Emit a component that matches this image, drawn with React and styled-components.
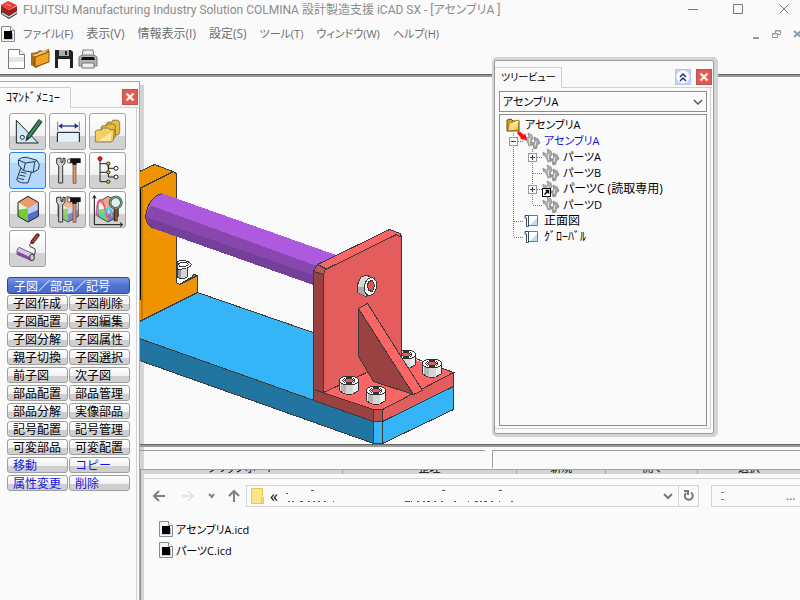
import React from "react";
import styled, { createGlobalStyle, css } from "styled-components";

const GlobalStyle = createGlobalStyle`
  * {
    box-sizing: border-box;
  }
  body {
    margin: 0;
    background: #fafafa;
    font-family: "Open Sans", "Noto Sans CJK JP", sans-serif;
    font-size: 12px;
    font-feature-settings: "palt";
    color: #000;
  }
  button, input, select {
    font: inherit;
    font-feature-settings: inherit;
    color: inherit;
    margin: 0;
    padding: 0;
    border: 0;
    background: none;
  }
  svg {
    display: block;
    flex: none;
  }
`;

const Page = styled.div`
  display: flex;
  flex-direction: column;
  min-height: 100vh;
  position: relative;
  overflow: hidden;
`;

const Header = styled.header`
  border-bottom: 2px solid #999;
  box-shadow: inset 0 -1px 0 #666;
`;

const TitleBar = styled.div`
  display: flex;
  align-items: center;
  height: 20px;
  padding-left: 1px;
  gap: 5px;
  color: #8c8c8c;
`;

const Title = styled.h1`
  flex: 1;
  margin: 0;
  font-family: Roboto, "Noto Sans CJK JP", sans-serif;
  font-size: 12px;
  font-weight: 400;
  line-height: 20px;
  white-space: nowrap;
`;

const WindowButtons = styled.div`
  display: flex;
  gap: 29px;
  padding-right: 8px;
`;

const PlainButton = styled.button`
  display: flex;
  align-items: center;
  justify-content: center;
`;

const MenuBar = styled.nav`
  display: flex;
  align-items: center;
  height: 28px;
  padding-left: 1px;
`;

const MenuList = styled.div`
  display: flex;
  flex: 1;
  align-items: center;
  gap: 13px;
  padding-left: 8px;
  color: #6e6e6e;
`;

const MenuItem = styled(PlainButton)`
  font-size: ${({ $kana }) => ($kana ? 11 : 12)}px;
  line-height: 16px;
`;

const MdiButtons = styled.div`
  display: flex;
  gap: 12px;
  margin-right: -3px;
`;

const ToolBar = styled.div`
  display: flex;
  align-items: center;
  height: 27px;
  padding: 0 0 5px 6px;
  gap: 4px;
`;

const Body = styled.div`
  display: flex;
  flex: 1;
`;

const Sidebar = styled.aside`
  flex: none;
  width: 140px;
  margin-top: 4px;
  padding: 5px 2px 0 0;
  border: 1px solid #a8a8a8;
  border-width: 1px 1px 0 0;
  box-shadow: 4px 4px 0 #d4d4d4;
`;

const PanelHead = styled.div`
  display: flex;
  height: 21px;
`;

const Tab = styled.h2`
  flex: none;
  width: ${({ $width }) => $width}px;
  margin: 0;
  padding-left: 6px;
  border: 1px solid #d0d0d0;
  border-width: 1px 1px 0 0;
  font-size: ${({ $size }) => $size}px;
  font-weight: 400;
  line-height: 19px;
  white-space: nowrap;
`;

const TabRest = styled.div`
  display: flex;
  flex: 1;
  justify-content: flex-end;
  gap: 5px;
  margin-right: -1px;
  padding-top: 2px;
  border-bottom: 1px solid #d0d0d0;
`;

const CloseButton = styled.button`
  display: flex;
  align-items: center;
  justify-content: center;
  width: 16px;
  height: 16px;
  border: 1px solid #c94f4f;
  background: #e05a5a;
`;

const CollapseButton = styled(CloseButton)`
  border-color: #b8c8ec;
  background: #c3d2f2;
`;

const SidebarBody = styled.div`
  height: calc(100% - 21px);
  padding: 5px 6px 0 7px;
  border-right: 1px solid #d0d0d0;
`;

const IconGrid = styled.div`
  display: grid;
  grid-template-columns: repeat(3, 37px);
  gap: 2px 3px;
  padding-left: 2px;
`;

const IconButton = styled.button`
  width: 37px;
  height: 37px;
  border: 1px solid #a3a3a3;
  border-radius: 3px;
  background: linear-gradient(#fff, #f0f0f0 64%, #d2d2d2 64%);
  ${({ $active }) =>
    $active &&
    css`
      border-color: #2f7fe0;
      background: linear-gradient(#d6f0fb, #cbe8fa 28%, #b4d6fa 28%);
    `}
`;

const GroupTitle = styled.button`
  display: block;
  width: 100%;
  height: 17px;
  margin-top: 10px;
  padding-left: 6px;
  border: 1px solid #2f4a80;
  border-radius: 3px;
  background: linear-gradient(#7a97e4, #5272d2 50%, #4a69c8);
  color: #fff;
  font-family: "Noto Sans CJK JP", sans-serif;
  font-feature-settings: normal;
  line-height: 14px;
  text-align: left;
`;

const CommandGrid = styled.div`
  display: grid;
  grid-template-columns: 1fr 1fr;
  gap: 2px 1px;
  margin-top: 1px;
`;

const CommandButton = styled.button`
  height: 16px;
  padding: 0 0 1px 5px;
  border: 1px solid #9f9f9f;
  border-radius: 3px;
  background: linear-gradient(#fff, #f0f0f0 60%, #cfcfcf 60%);
  font-family: "Noto Sans CJK JP", sans-serif;
  font-feature-settings: normal;
  line-height: 13px;
  text-align: left;
  white-space: nowrap;
  color: ${({ $blue }) => ($blue ? "#1414e0" : "#000")};
`;

const Main = styled.main`
  display: flex;
  flex: 1;
  flex-direction: column;
  min-width: 0;
`;

const Canvas = styled.svg`
  flex: 1;
  width: 100%;
  height: 367px;
  min-height: 367px;
`;

const StatusStrip = styled.div`
  display: flex;
  gap: 7px;
  height: 25px;
  padding: 5px 0 1px;
  border-top: 1px solid #666;
  box-shadow: inset 0 2px 0 #999;
`;

const StatusCell = styled.div`
  flex: ${({ $grow }) => $grow};
  border-top: 1px solid #a0a0a0;
  border-left: ${({ $edge }) => ($edge ? "1px solid #a0a0a0" : "0")};
`;

const Explorer = styled.section`
  height: 131px;
  border-left: 1px solid #8e8e8e;
`;

const Ribbon = styled.div`
  display: grid;
  grid-template-columns: 202fr 175fr 89fr 92fr 102fr;
  height: 5px;
  overflow: hidden;
  border-top: 1px solid #a0a4a0;
  background: #d4d4d4;
`;

const RibbonGroup = styled.div`
  display: flex;
  align-items: flex-end;
  justify-content: center;
  height: 4px;
  border-right: 1px solid #a8a8a8;
  font-size: 11px;
  line-height: 12px;

  &:last-child {
    border-right: 0;
  }
`;

const NavBar = styled.div`
  display: flex;
  align-items: center;
  height: 33px;
  margin-top: 4px;
  padding: 4px 0 3px 12px;
  border-top: 1px solid #d4d4d4;
`;

const NavButtons = styled.div`
  display: flex;
  gap: 13px;
  width: 93px;
`;

const AddressBar = styled.div`
  display: flex;
  flex: 1;
  align-items: center;
  height: 22px;
  padding-left: 4px;
  border: 1px solid #d4d4d4;
`;

const AddressText = styled.div`
  display: flex;
  flex: 1;
  align-items: center;
  gap: 8px;
  padding-left: 6px;
  font-size: 16px;
  line-height: 18px;
`;

const RefreshButton = styled(PlainButton)`
  width: 20px;
  height: 20px;
  border-left: 1px solid #d4d4d4;
`;

const SearchBox = styled.label`
  display: flex;
  align-items: center;
  width: 89px;
  height: 22px;
  margin-left: 12px;
  padding-left: 9px;
  border: 1px solid #d4d4d4;
  border-right: 0;
  color: #666;
`;

const SearchInput = styled.input`
  width: 14px;
  margin-left: auto;
  outline: none;
`;

const FileList = styled.ul`
  margin: 0;
  padding: 7px 0 0 18px;
  list-style: none;
`;

const FileItem = styled.li`
  display: flex;
  align-items: center;
  gap: 3px;
  height: 21px;
  font-size: 11px;
`;

/* The tree window floats over the drawing area */
const TreeWindow = styled.section`
  position: absolute;
  top: 60px;
  right: 86px;
  display: flex;
  flex-direction: column;
  width: 220px;
  height: 374px;
  padding: 6px 2px 4px 0;
  border: 1px solid #9a9a9a;
  border-radius: 2px;
  background: #fafafa;
  box-shadow: 1px 0 0 3px #d4d4d4;
`;

const TreeBody = styled.div`
  display: flex;
  flex: 1;
  flex-direction: column;
  gap: 2px;
  padding: 3px 3px 2px 4px;
  border: 1px solid #d0d0d0;
  border-width: 0 1px 1px 0;
`;

const SelectWrap = styled.div`
  display: grid;
  align-items: center;
  height: 21px;
  border: 1px solid #8c8c8c;

  > * {
    grid-area: 1 / 1;
  }
  > svg {
    justify-self: end;
    margin-right: 3px;
    pointer-events: none;
  }
`;

const Select = styled.select`
  appearance: none;
  width: 100%;
  height: 19px;
  padding-left: 3px;
  font-size: 11px;
  outline: none;
`;

const Tree = styled.ul`
  flex: 1;
  margin: 0;
  padding: 2px 0 0 4px;
  border: 1px solid #8c8c8c;
  list-style: none;
`;

const TreeRow = styled.li`
  display: flex;
  align-items: center;
  height: 16px;
  font-size: ${({ $size }) => $size}px;
  line-height: 16px;
  white-space: nowrap;
  color: ${({ $blue }) => ($blue ? "#1414e0" : "#000")};
`;

const TreeLabel = styled.span`
  padding-left: 3px;
`;

const menuItems = [
  { label: "ファイル(F)", kana: true },
  { label: "表示(V)" },
  { label: "情報表示(I)" },
  { label: "設定(S)" },
  { label: "ツール(T)", kana: true },
  { label: "ウィンドウ(W)", kana: true },
  { label: "ヘルプ(H)", kana: true },
];

const commands = [
  "子図作成", "子図削除",
  "子図配置", "子図編集",
  "子図分解", "子図属性",
  "親子切換", "子図選択",
  "前子図", "次子図",
  "部品配置", "部品管理",
  "部品分解", "実像部品",
  "記号配置", "記号管理",
  "可変部品", "可変配置",
  "移動", "コピー",
  "属性変更", "削除",
];

const blueCommands = ["移動", "コピー", "属性変更", "削除"];

const treeRows = [
  { label: "アセンブリA", icon: "folder", cells: [] },
  { label: "アセンブリA", icon: "active", cells: ["minus"], blue: true },
  { label: "パーツA", icon: "part", cells: ["line", "plus"] },
  { label: "パーツB", icon: "part", cells: ["line", "tee"] },
  { label: "パーツC (読取専用)", icon: "link", cells: ["line", "plus"], size: 12 },
  { label: "パーツD", icon: "part", cells: ["line", "end"] },
  { label: "正面図", icon: "sheet", cells: ["tee"], size: 12 },
  { label: "ｸﾞﾛｰﾊﾞﾙ", icon: "sheet", cells: ["end"], size: 12 },
];

const TreeCell = ({ kind }) => {
  const box = kind === "plus" || kind === "minus";
  return (
    <svg width="19" height="16" shapeRendering="crispEdges" aria-hidden="true">
      <path
        d={kind === "end" ? "M9.5 0V8" : "M9.5 0V16"}
        stroke="#777"
        strokeDasharray="1 1"
      />
      {kind !== "line" && (
        <path d="M10 8.5H19" stroke="#777" strokeDasharray="1 1" />
      )}
      {box && (
        <g fill="none">
          <rect x="5.5" y="4.5" width="8" height="8" fill="#fafafa" stroke="#999" />
          <path
            d={kind === "plus" ? "M7 8.5H12M9.5 6V11" : "M7 8.5H12"}
            stroke="#542a70"
          />
        </g>
      )}
    </svg>
  );
};

const TreeIcon = ({ kind }) => {
  if (kind === "folder") {
    return (
      <svg width="18" height="16" viewBox="-2 0 18 16" aria-hidden="true">
        <path d="M1 3l4-1 2 2h6v10H1z" fill="#d9a520" stroke="#6b500c" />
        <path d="M3 6l10-3-1 10-10 1z" fill="#f8d970" stroke="#8b6a14" strokeWidth=".7" />
        <path d="M4 12l6-8h3z" fill="#fff3b8" />
      </svg>
    );
  }
  if (kind === "sheet") {
    return (
      <svg width="18" height="16" viewBox="-2 0 18 16" aria-hidden="true">
        <path d="M2.500 2.500h10v10h-10z" fill="#fff" stroke="#777" />
        <path d="M5 12l7-7v7z" fill="#b7e2ee" />
        <path d="M0 2.500h3.500v11H1.500V5H0z" fill="#fff" stroke="#334b63" />
      </svg>
    );
  }
  return (
    <svg width="18" height="16" viewBox="-1 0 18 16" overflow="visible" aria-hidden="true">
      <path
        d="M0 3l3 2 2-1-1-4 4 2 1 4-2 2 1 4-3 1-2-5-3-2z"
        fill="#b0b0b0"
        stroke="#8c8c8c"
        strokeWidth=".8"
      />
      <path
        d="M6 8l3 2 2-1-1-5 4 2 2 4-3 2v3l-3 1-1-4-3-2z"
        fill="#a2a2a2"
        stroke="#808080"
        strokeWidth=".8"
      />
      <path d="M5 5l1 6M12 8l-1 5" stroke="#e8e8e8" />
      {kind === "active" && (
        <path d="M-7 0l2-2 5 4 1-2 2 7-7-1 1-1z" fill="#f00f14" />
      )}
      {kind === "link" && (
        <g>
          <rect x="-.5" y="7.500" width="8" height="8" fill="#fff" stroke="#000" />
          <path d="M1.500 13.500l4-4M2.500 9.500h3v3" stroke="#000" strokeWidth="1.500" fill="none" />
        </g>
      )}
    </svg>
  );
};

const DocIcon = () => (
  <svg width="14" height="16" viewBox="0 0 14 16" aria-hidden="true">
    <path d="M.5.5h9l4 4v11H.5z" fill="#f4f4f4" stroke="#8a8a8a" />
    <path d="M9.5.5v4h4" fill="#fff" stroke="#8a8a8a" />
    <path d="M2 13.500h10V7h-1z" fill="#9fb6d8" />
    <rect x="3" y="5" width="8" height="8" fill="#000" />
  </svg>
);

const Cube = ({ opacity = 1 }) => (
  <g opacity={opacity}>
    <path d="M57 52v41L27 76V34z" fill="#74c93c" />
    <path d="M57 52L27 34v22z" fill="#eef7da" />
    <path d="M57 52v41l31-17V34z" fill="#5570c0" />
    <path d="M57 52l31-18v22L57 70z" fill="#c3cdf2" />
    <path d="M57 16l31 18-31 18-30-18z" fill="#eb9a6c" />
    <path d="M57 16l31 18v42L57 93 27 76V34z" fill="none" stroke="#222" strokeWidth="3" />
  </g>
);

const Tools = () => (
  <g>
    <path d="M23 20v15l6 6v52h12V41l7-7V20l-6-2v13h-6V18z" fill="#d0d0d0" stroke="#333" strokeWidth="3" />
    <path d="M72 37h9v57h-9z" fill="#e09468" stroke="#69432c" strokeWidth="2" />
    <path d="M56 22l8-2v14l-8-2z" fill="#fff" stroke="#222" strokeWidth="2" />
    <path d="M64 19h31v14H83v5H70v-5h-6z" fill="#111" />
  </g>
);

// Command icons share one 111-unit square
const toolIcons = [
  {
    name: "作図",
    art: (
      <g>
        <path d="M22 22v68h66z" fill="#ccecf8" stroke="#222" strokeWidth="3" />
        <circle cx="40" cy="73" r="6" fill="#fff" stroke="#222" strokeWidth="3" />
        <path d="M95 22L59 71" stroke="#173f2b" strokeWidth="14" />
        <path d="M95 22L59 71" stroke="#418d62" strokeWidth="7" />
        <path d="M53 67l11 8-15 11z" fill="#333" />
      </g>
    ),
  },
  {
    name: "寸法",
    art: (
      <g>
        <path d="M27 59h64v27H27z" fill="#e4f3fa" />
        <path d="M25 87V58h66v29" fill="none" stroke="#111" strokeWidth="3" />
        <path d="M26 26v27M91 26v27" stroke="#a066b8" strokeWidth="3" />
        <path d="M30 39h57" stroke="#303c9a" strokeWidth="4" />
        <path d="M28 39l12-8v16zM89 39l-12-8v16z" fill="#26338c" />
      </g>
    ),
  },
  {
    name: "フォルダ",
    art: (
      <g fill="#e8bd45" stroke="#6d551b" strokeWidth="2">
        <path d="M52 66V31l5-4h12l3-6 16 1 4 6v32l-5 6z" />
        <path d="M36 76V42l5-4h12l3-5h18l5 5v34l-5 5z" />
        <path d="M19 87V54l7-3h11l3-6h19l4 5h13l-3 32-7 5z" fill="#f3cf65" />
        <path d="M30 84l38-28-4 28z" fill="#ffe9a0" stroke="none" />
      </g>
    ),
  },
  {
    name: "部品",
    active: true,
    art: (
      <g fill="#b8dcf8" stroke="#213a58" strokeWidth="3">
        <path d="M37 43L23 84q12 12 34 8l12-37z" />
        <path d="M28 24q7-10 25-8l31 9 7 13-3 14-15 9-30-5-14-17z" />
        <path d="M28 24l21 9 28-4 7-4M49 33l-5 22M77 29l-4 31" fill="none" />
        <path d="M35 60l17 4M31 69l18 4M28 79l17 4" fill="none" />
      </g>
    ),
  },
  { name: "ツール", art: <Tools /> },
  {
    name: "構成",
    art: (
      <g stroke="#222" strokeWidth="3">
        <path d="M33 20v69h25M33 35h25v14h23M33 61h25v14h23M58 35v26" fill="none" />
        <circle cx="33" cy="20" r="6" fill="#ed1717" stroke="#9a1414" />
        <circle cx="58" cy="35" r="5" fill="#e8cf24" />
        <circle cx="58" cy="61" r="5" fill="#e8cf24" />
        <circle cx="58" cy="89" r="5" fill="#e8cf24" />
        <circle cx="81" cy="49" r="6" fill="#fff" />
        <circle cx="81" cy="75" r="6" fill="#fff" />
      </g>
    ),
  },
  { name: "ソリッド", art: <Cube /> },
  {
    name: "ソリッド編集",
    art: (
      <g>
        <Cube opacity={0.7} />
        <Tools />
      </g>
    ),
  },
  {
    name: "解析",
    art: (
      <g>
        <Cube opacity={0.8} />
        <path d="M16 16v85h84M11 22l5-9 5 9M93 95l8 6-8 6" fill="none" stroke="#111" strokeWidth="3" />
        <path d="M22 76q2-52 13-49 9 3 16 38t17-8" fill="none" stroke="#ee4a9a" strokeWidth="5" />
        <path d="M24 53q12 30 20 22l12-24q8-4 13 25" fill="none" stroke="#3dd0dc" strokeWidth="5" />
        <path d="M80 52v39" stroke="#502f22" strokeWidth="12" />
        <path d="M81 52v37" stroke="#a4603b" strokeWidth="4" />
        <circle cx="80" cy="35" r="17" fill="#e4f2ee" stroke="#2e5a43" strokeWidth="8" />
        <circle cx="80" cy="35" r="17" fill="none" stroke="#8fb8a0" strokeWidth="3" />
      </g>
    ),
  },
  {
    name: "塗装",
    art: (
      <g>
        <path d="M86 16L70 36" stroke="#59201c" strokeWidth="12" strokeLinecap="round" />
        <path d="M85 18L72 34" stroke="#a8493e" strokeWidth="6" strokeLinecap="round" />
        <path d="M68 38q-11 6-4 12l13 6q5 8-3 22" fill="none" stroke="#333" strokeWidth="3" />
        <path d="M30 52l43 20-6 20-43-19q-3-15 6-21z" fill="#d9c6ed" stroke="#333" strokeWidth="2" />
        <path d="M25 64l42 19v8L26 74z" fill="#8245aa" />
        <ellipse cx="69" cy="82" rx="7" ry="10" fill="#c8c8c8" stroke="#333" strokeWidth="3" />
      </g>
    ),
  },
];

const Bolt = ({ x, y }) => (
  <g transform={`translate(${x} ${y})`}>
    <path d="M-9 0v10q9 8 19 0V0z" fill="#eee" stroke="#333" />
    <path d="M-8 2v8l5 3V4z" fill="#b5b5b5" stroke="none" />
    <path d="M-3 4v9h7V4z" fill="#d4d4d4" stroke="none" />
    <ellipse cx=".5" cy="0" rx="9.5" ry="4.5" fill="#fff" stroke="#333" />
    <ellipse cx=".5" cy="0" rx="6" ry="3" fill="none" stroke="#333" />
    <path d="M-4 0l2-2h5l2 2-2 2h-5z" fill="#dc6060" stroke="#333" />
  </g>
);

const AssemblyDrawing = () => (
  <Canvas role="img" aria-label="アセンブリA">
    <g
      transform="translate(-139.500 -76.500)"
      stroke="#3a3a3a"
      strokeWidth="1"
      shapeRendering="crispEdges"
    >
      <path d="M139 321l58-29 185 64v65l-9 0-234-83z" fill="#36b4f8" />
      <path d="M139 338l234 83v22L139 360z" fill="#2275a0" />
      <path d="M373 421h9v22h-9zM382 421l71-35v23l-71 34z" fill="#36b4f8" />

      <path d="M139 171l15-7 21 8 1 2v108l3 2 13-8 1-2 4 1v17l-58 29z" fill="#ed9400" />
      <path d="M141 186v132" stroke="#c67a00" strokeWidth="2" />
      <path d="M139 188l34-17M176 282l3 2 18-9" fill="none" />
      <path d="M140 188v111" stroke="#000" />
      <path d="M177 267v10q6 3 10-1v-11z" fill="#d6d6d6" />
      <path d="M177 268v8l3 2v-10z" fill="#999" stroke="none" />
      <path d="M177 261q9-3 14 3-1 4-14 5z" fill="#fff" />
      <path d="M178 263l3-1h5l2 2-3 2h-6z" fill="#fff" />

      <g stroke="none">
        <path d="M162 193l175 62v38l-184-65q-8-5-8-12 2-18 17-23z" fill="#ad5adf" />
        <path d="M150 205l187 68v20l-184-65q-8-5-8-12z" fill="#8747ad" />
        <path d="M147 217l190 66v10l-184-65q-5-3-6-11z" fill="#74409a" />
      </g>
      <path d="M162 193q-14 3-17 23 1 9 8 12" fill="none" />

      <path d="M313 389l10 3 78-36 52 16-71 38h-9z" fill="#fa6666" />
      <path d="M401 361v-6l52 17-71 38-59-18z" fill="#fa6666" stroke="none" />
      <path d="M415 358l38 14" />
      <Bolt x={405} y={354} />
      <path d="M325 268l71-35 5 4v118l-35 17-43 20V274z" fill="#e35d5d" />
      <path d="M317 264l72-35 11 4 1 4-5-3-71 35z" fill="#fa6666" />
      <path d="M313 271l4-7 8 4-2 6z" fill="#c35454" />
      <path d="M313 271l10 3v118l-10-3z" fill="#9a4141" />
      <path d="M401 355v10l-35 7z" fill="#fa6666" stroke="none" />
      <path d="M401 340v16" />
      <path d="M313 389l60 20v12l-60-21z" fill="#9a4141" />
      <path d="M373 409h9v12h-9z" fill="#bd4d4d" />
      <path d="M382 409l71-37v14l-71 35z" fill="#e35d5d" />
      <path d="M358 308l55 86-40-13-15-25z" fill="#9a4141" />
      <path d="M358 308l9-5 55 87-9 4z" fill="#fa6666" />

      <path d="M361 276q-5 6-4 16l9 4 8-17-7-4z" fill="#d9d9d9" />
      <path d="M357 286v6l7 3v-8z" fill="#aaa" stroke="none" />
      <ellipse cx="370" cy="286" rx="6" ry="9" fill="#fff" transform="rotate(12 370 286)" />
      <path d="M368 281l4-1 2 5-2 6-4-1-1-5z" fill="#dc5555" />

      <Bolt x={348} y={380} />
      <Bolt x={375} y={390} />
      <Bolt x={431} y={363} />
    </g>
  </Canvas>
);

const CloseGlyph = () => (
  <svg width="10" height="10" viewBox="0 0 10 10" aria-hidden="true">
    <path d="M1.500 1.500l7 7M8.500 1.500l-7 7" stroke="#fff3dc" strokeWidth="2.400" />
  </svg>
);

const App = () => (
  <Page>
    <GlobalStyle />
    <Header>
      <TitleBar>
        <svg width="17" height="18" viewBox="0 0 17 18" aria-hidden="true">
          <path d="M0 9l8 4 8-5v5l-8 5-8-5z" fill="#3b3232" />
          <path d="M1 12l7 4 8-5" fill="none" stroke="#d8c8c0" strokeWidth="1.500" />
          <path d="M0 4l8 5 8-4v4l-8 5-8-5z" fill="#a81d17" />
          <path d="M0 4l7-4 9 4-8 5z" fill="#e84036" />
          <path d="M5 3l5 2" stroke="#ff8d7c" />
        </svg>
        <Title>
          FUJITSU Manufacturing Industry Solution COLMINA 設計製造支援 iCAD SX - [アセンブリA ]
        </Title>
        <WindowButtons>
          <PlainButton aria-label="最小化">
            <svg width="16" height="16" fill="none" stroke="#777">
              <path d="M2 7.500h10" />
            </svg>
          </PlainButton>
          <PlainButton aria-label="最大化">
            <svg width="16" height="16" fill="none" stroke="#777">
              <path d="M2.500 2.500h9v9h-9z" />
            </svg>
          </PlainButton>
          <PlainButton aria-label="閉じる">
            <svg width="16" height="16" fill="none" stroke="#777">
              <path d="M3.500 2.500l9 9M12.500 2.500l-9 9" />
            </svg>
          </PlainButton>
        </WindowButtons>
      </TitleBar>
      <MenuBar>
        <DocIcon />
        <MenuList>
          {menuItems.map(({ label, kana }) => (
            <MenuItem key={label} $kana={kana}>{label}</MenuItem>
          ))}
        </MenuList>
        <MdiButtons>
          <PlainButton aria-label="ウィンドウを最小化">
            <svg width="8" height="10" fill="none" stroke="#8b9daa">
              <path d="M1 9h6" strokeWidth="2" />
            </svg>
          </PlainButton>
          <PlainButton aria-label="ウィンドウを元に戻す">
            <svg width="9" height="10" fill="none" stroke="#8b9daa">
              <path d="M3.500 4V1.500h5v4H6M.5 4.500h5v4h-5zM3 2h6M0 5h6" />
            </svg>
          </PlainButton>
          <PlainButton aria-label="ウィンドウを閉じる">
            <svg width="10" height="10" fill="none" stroke="#8b9daa">
              <path d="M1 2l7 6M8 2L1 8" strokeWidth="2" />
            </svg>
          </PlainButton>
        </MdiButtons>
      </MenuBar>
      <ToolBar>
        <PlainButton aria-label="新規">
          <svg width="20" height="20" viewBox="0 0 20 20">
            <path d="M2.500.5h11l5 5v14h-16z" fill="#fff" stroke="#777" />
            <path d="M13.500.5v5h5" fill="#fff" stroke="#777" />
            <path d="M3 8h15v5H3z" fill="#dfe9ec" />
          </svg>
        </PlainButton>
        <PlainButton aria-label="開く">
          <svg width="20" height="20" viewBox="0 0 20 20">
            <path d="M1 4l6-1 3-2 3 1 6-2v12L6 19l-5-3z" fill="#a66b16" />
            <path d="M2 6l5-1 3-2 8-2-3 3-9 4z" fill="#f6c478" />
            <path d="M5 8l11-4 3-2v11L5 18z" fill="#f2a326" stroke="#805011" />
          </svg>
        </PlainButton>
        <PlainButton aria-label="保存">
          <svg width="20" height="20" viewBox="0 0 20 20">
            <path d="M1 1h16l2 2v16H1z" fill="#222" />
            <path d="M5 1h10v6H5z" fill="#aaa" />
            <path d="M11 2h2v4h-2z" fill="#222" />
            <path d="M4 10h12v9H4z" fill="#fafafa" />
          </svg>
        </PlainButton>
        <PlainButton aria-label="印刷">
          <svg width="20" height="20" viewBox="0 0 20 20">
            <path d="M5 1h10l1 8H4z" fill="#f0f0f0" stroke="#777" />
            <path d="M1 8l3-2h12l3 2v9H1z" fill="#b4b4b4" stroke="#777" />
            <path d="M4 8h12l1 3H3z" fill="#111" />
            <path d="M4 14h12v5H4z" fill="#eee" stroke="#777" />
          </svg>
        </PlainButton>
      </ToolBar>
    </Header>

    <Body>
      <Sidebar>
        <PanelHead>
          <Tab $width={71} $size={12}>ｺﾏﾝﾄﾞﾒﾆｭｰ</Tab>
          <TabRest>
            <CloseButton aria-label="コマンドメニューを閉じる">
              <CloseGlyph />
            </CloseButton>
          </TabRest>
        </PanelHead>
        <SidebarBody>
          <IconGrid>
            {toolIcons.map(({ name, art, active }) => (
              <IconButton key={name} aria-label={name} $active={active}>
                <svg width="35" height="35" viewBox="3 3 105 105">{art}</svg>
              </IconButton>
            ))}
          </IconGrid>
          <GroupTitle>子図／部品／記号</GroupTitle>
          <CommandGrid>
            {commands.map((name) => (
              <CommandButton key={name} $blue={blueCommands.includes(name)}>
                {name}
              </CommandButton>
            ))}
          </CommandGrid>
        </SidebarBody>
      </Sidebar>

      <Main>
        <AssemblyDrawing />
        <StatusStrip>
          <StatusCell $grow={346} />
          <StatusCell $grow={307} $edge />
        </StatusStrip>
        <Explorer>
          <Ribbon>
            {["クリップボード", "整理", "新規", "開く", "選択"].map((name) => (
              <RibbonGroup key={name}>{name}</RibbonGroup>
            ))}
          </Ribbon>
          <NavBar>
            <NavButtons>
              <PlainButton aria-label="戻る">
                <svg width="13" height="14" fill="none" stroke="#808080" strokeWidth="2">
                  <path d="M12 7H1M6 2L1 7l5 5" />
                </svg>
              </PlainButton>
              <PlainButton aria-label="進む">
                <svg width="16" height="14" fill="none" stroke="#cfcfcf">
                  <path d="M3 7h11M9 2l5 5-5 5" />
                </svg>
              </PlainButton>
              <PlainButton aria-label="履歴">
                <svg width="7" height="14" fill="none" stroke="#808080" strokeWidth="2">
                  <path d="M1 5l3 3 2-3" />
                </svg>
              </PlainButton>
              <PlainButton aria-label="上へ">
                <svg width="12" height="14" fill="none" stroke="#808080" strokeWidth="2">
                  <path d="M6 13V2M1 7l5-5 5 5" />
                </svg>
              </PlainButton>
            </NavButtons>
            <AddressBar>
              <svg width="13" height="16" viewBox="0 0 13 16">
                <path d="M.5.500h11v9h1v6h-12z" fill="#fde48c" stroke="#e8c64f" />
                <path d="M10.500 9.500v6" stroke="#e8c64f" />
              </svg>
              <AddressText>
                «
                <svg width="240" height="14" fill="none" stroke="#555" shapeRendering="crispEdges">
                  <path d="M25 1.500h3M156 1.500h3M213 1.500h3M0 4.500h2" />
                  <path d="M2 12.500h2M6 12.500h2M14 12.500h3M22 12.500h2M27 12.500h2M32 12.500h2M38 12.500h2M47 12.500h1" />
                  <path d="M119 12.500h5M125 12.500h1M131 12.500h2M137 12.500h2M141 12.500h3M148 12.500h2M155 12.500h2M168 12.500h2M182 12.500h1M189 12.500h3M194 12.500h2M198 12.500h3M205 12.500h2M213 12.500h1M225 12.500h2" />
                </svg>
              </AddressText>
              <svg width="16" height="14" fill="none" stroke="#777" strokeWidth="2">
                <path d="M2 5l4 4 4-4" />
              </svg>
              <RefreshButton aria-label="更新">
                <svg width="12" height="12" viewBox="0 0 12 12" fill="none" stroke="#777" strokeWidth="2">
                  <path d="M8 2.500A4 4 0 1 1 3 3M1 1h4v4" />
                </svg>
              </RefreshButton>
            </AddressBar>
            <SearchBox>
              <svg width="4" height="10" stroke="#888" shapeRendering="crispEdges">
                <path d="M0 1.500h3M0 8.500h3" />
              </svg>
              <SearchInput aria-label="検索" defaultValue="..." />
            </SearchBox>
          </NavBar>
          <FileList>
            <FileItem>
              <DocIcon />
              アセンブリA.icd
            </FileItem>
            <FileItem>
              <DocIcon />
              パーツC.icd
            </FileItem>
          </FileList>
        </Explorer>
      </Main>
    </Body>

    <TreeWindow>
      <PanelHead>
        <Tab $width={67} $size={10}>ツリービュー</Tab>
        <TabRest>
          <CollapseButton aria-label="折りたたむ">
            <svg width="14" height="14" viewBox="0 0 14 14">
              <circle cx="7" cy="7" r="6.500" fill="#fff" />
              <path d="M4 7l3-3 3 3M4 11l3-3 3 3" fill="none" stroke="#17318c" strokeWidth="1.500" />
            </svg>
          </CollapseButton>
          <CloseButton aria-label="ツリービューを閉じる">
            <CloseGlyph />
          </CloseButton>
        </TabRest>
      </PanelHead>
      <TreeBody>
        <SelectWrap>
          <Select aria-label="アセンブリ" defaultValue="a">
            <option value="a">アセンブリA</option>
          </Select>
          <svg width="10" height="8" fill="none" stroke="#555" strokeWidth="1.500">
            <path d="M1 2l4 4 4-4" />
          </svg>
        </SelectWrap>
        <Tree>
          {treeRows.map(({ label, icon, cells, blue, size = 11 }, index) => (
            <TreeRow key={index} $blue={blue} $size={size}>
              {cells.map((kind, i) => (
                <TreeCell key={i} kind={kind} />
              ))}
              <TreeIcon kind={icon} />
              <TreeLabel>{label}</TreeLabel>
            </TreeRow>
          ))}
        </Tree>
      </TreeBody>
    </TreeWindow>
  </Page>
);

export default App;
